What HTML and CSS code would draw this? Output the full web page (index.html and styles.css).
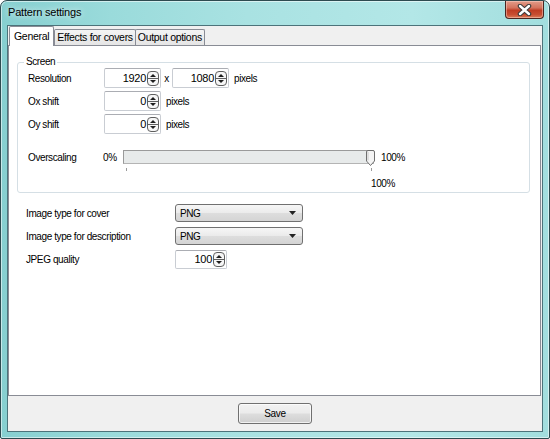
FILE: index.html
```html
<!DOCTYPE html>
<html>
<head>
<meta charset="utf-8">
<link rel="stylesheet" href="styles.css">
</head>
<body>
<div class="window">
  <div class="titlebar">
    <span class="title">Pattern settings</span>
    <div class="close">
      <svg width="17" height="12" viewBox="0 0 17 12">
        <path d="M4 2 L13 10 M13 2 L4 10" stroke="#3a3a3a" stroke-width="4.5" stroke-linecap="round"/>
        <path d="M4 2 L13 10 M13 2 L4 10" stroke="#ffffff" stroke-width="2.4" stroke-linecap="round"/>
      </svg>
    </div>
  </div>
  <div class="client">
    <div class="tabs">
      <div class="tab active">General</div>
      <div class="tab">Effects for covers</div>
      <div class="tab">Output options</div>
    </div>
    <div class="panel">
      <fieldset class="group">
        <legend>Screen</legend>
        <div class="row">
          <span class="lbl">Resolution</span>
          <div class="spin w57"><span class="val">1920</span><span class="arrows"><svg width="12" height="15" viewBox="0 0 12 15"><rect x="0.5" y="0.5" width="11" height="14" rx="3.5" fill="#f6f6f6" stroke="#5e5e5e"/><line x1="1" y1="7.5" x2="11" y2="7.5" stroke="#5e5e5e"/><path d="M3 6 L6 3 L9 6Z" fill="#1e1e1e"/><path d="M3 9 L6 12 L9 9Z" fill="#1e1e1e"/></svg></span></div>
          <span class="sep">x</span>
          <div class="spin w57"><span class="val">1080</span><span class="arrows"><svg width="12" height="15" viewBox="0 0 12 15"><rect x="0.5" y="0.5" width="11" height="14" rx="3.5" fill="#f6f6f6" stroke="#5e5e5e"/><line x1="1" y1="7.5" x2="11" y2="7.5" stroke="#5e5e5e"/><path d="M3 6 L6 3 L9 6Z" fill="#1e1e1e"/><path d="M3 9 L6 12 L9 9Z" fill="#1e1e1e"/></svg></span></div>
          <span class="unit">pixels</span>
        </div>
        <div class="row">
          <span class="lbl">Ox shift</span>
          <div class="spin w57"><span class="val">0</span><span class="arrows"><svg width="12" height="15" viewBox="0 0 12 15"><rect x="0.5" y="0.5" width="11" height="14" rx="3.5" fill="#f6f6f6" stroke="#5e5e5e"/><line x1="1" y1="7.5" x2="11" y2="7.5" stroke="#5e5e5e"/><path d="M3 6 L6 3 L9 6Z" fill="#1e1e1e"/><path d="M3 9 L6 12 L9 9Z" fill="#1e1e1e"/></svg></span></div>
          <span class="unit">pixels</span>
        </div>
        <div class="row">
          <span class="lbl">Oy shift</span>
          <div class="spin w57"><span class="val">0</span><span class="arrows"><svg width="12" height="15" viewBox="0 0 12 15"><rect x="0.5" y="0.5" width="11" height="14" rx="3.5" fill="#f6f6f6" stroke="#5e5e5e"/><line x1="1" y1="7.5" x2="11" y2="7.5" stroke="#5e5e5e"/><path d="M3 6 L6 3 L9 6Z" fill="#1e1e1e"/><path d="M3 9 L6 12 L9 9Z" fill="#1e1e1e"/></svg></span></div>
          <span class="unit">pixels</span>
        </div>
        <div class="row slider-row">
          <span class="lbl lbl-short">Overscaling</span>
          <span class="pct">0%</span>
          <div class="track">
            <svg class="thumb" width="9" height="16" viewBox="0 0 9 16"><path d="M0.5 2 Q0.5 0.5 2 0.5 H7 Q8.5 0.5 8.5 2 V11 L4.5 15.5 L0.5 11 Z" fill="#f4f4f4" stroke="#6f6f6f"/><path d="M2 2 V10.5" stroke="#c8c8c8"/></svg>
          </div>
          <span class="pct right">100%</span>
        </div>
        <div class="ticks"><span class="tick"></span><span class="tick"></span></div>
        <div class="ticklabel">100%</div>
      </fieldset>
      <div class="row out">
        <span class="lbl wide">Image type for cover</span>
        <div class="combo"><span>PNG</span><svg width="7" height="4" viewBox="0 0 7 4"><path d="M0 0 H7 L3.5 4Z" fill="#222"/></svg></div>
      </div>
      <div class="row out">
        <span class="lbl wide">Image type for description</span>
        <div class="combo"><span>PNG</span><svg width="7" height="4" viewBox="0 0 7 4"><path d="M0 0 H7 L3.5 4Z" fill="#222"/></svg></div>
      </div>
      <div class="row out">
        <span class="lbl wide">JPEG quality</span>
        <div class="spin w52"><span class="val">100</span><span class="arrows"><svg width="12" height="15" viewBox="0 0 12 15"><rect x="0.5" y="0.5" width="11" height="14" rx="3.5" fill="#f6f6f6" stroke="#5e5e5e"/><line x1="1" y1="7.5" x2="11" y2="7.5" stroke="#5e5e5e"/><path d="M3 6 L6 3 L9 6Z" fill="#1e1e1e"/><path d="M3 9 L6 12 L9 9Z" fill="#1e1e1e"/></svg></span></div>
      </div>
    </div>
    <div class="footer">
      <button class="btn">Save</button>
    </div>
  </div>
</div>
</body>
</html>
```

FILE: styles.css
```css
* { box-sizing: border-box; }
html, body { margin: 0; padding: 0; background: #ffffff; }
body {
  font-family: "Liberation Sans", Arial, sans-serif;
  font-size: 10px;
  letter-spacing: -0.4px;
  color: #000;
}
.window {
  width: 550px;
  height: 439px;
  border: 1px solid #2d4b50;
  border-radius: 7px 7px 2px 2px;
  background: linear-gradient(90deg, #86cfd0 0%, #9adbdb 20%, #a9e2e2 45%, #b3e7e7 75%, #a2dede 100%);
  box-shadow: inset 0 0 0 1px rgba(255,255,255,0.55);
  padding: 0 6px 6px 6px;
  display: flex;
  flex-direction: column;
}
.titlebar {
  height: 24px;
  display: flex;
  align-items: flex-start;
}
.title {
  font-size: 11px;
  letter-spacing: -0.2px;
  margin-top: 5px;
  margin-left: 1px;
  color: #000;
  text-shadow: 0 0 6px rgba(255,255,255,0.9);
}
.close {
  margin-left: auto;
  margin-right: -1px;
  width: 39px;
  height: 18px;
  border: 1px solid #4a2520;
  border-top: none;
  border-radius: 0 0 4px 4px;
  background: linear-gradient(180deg, #e39d8a 0%, #d4735d 40%, #bf3d24 55%, #c84e32 80%, #db7c58 100%);
  box-shadow: inset 0 0 0 1px rgba(255,220,210,0.45);
  display: flex;
  align-items: center;
  justify-content: center;
}
.client {
  flex: 1;
  background: #f0f0f0;
  border: 1px solid #4c737a;
  display: flex;
  flex-direction: column;
}
.tabs {
  display: flex;
  align-items: flex-end;
  height: 19px;
  padding-left: 1px;
  position: relative;
  z-index: 1;
}
.tab {
  height: 16px;
  padding: 0 2px;
  border: 1px solid #898c95;
  border-bottom: none;
  background: linear-gradient(180deg, #f4f4f4, #e5e5e5);
  font-size: 10.5px;
  letter-spacing: -0.3px;
  line-height: 15px;
  margin-right: -1px;
  border-radius: 2px 2px 0 0;
  color: #000;
}
.tab.active {
  height: 20px;
  margin-bottom: -1px;
  background: #ffffff;
  padding: 0 4px;
  line-height: 19px;
  margin-right: 0;
}
.panel {
  height: 351px;
  margin-right: 1px;
  background: #ffffff;
  border: 1px solid #898c95;
  display: flex;
  flex-direction: column;
}
.group {
  margin: 10px 10px 0 8px;
  padding: 0 10px 0 10px;
  border: 1px solid #d5dfe5;
  border-radius: 3px;
  height: 137px;
  min-width: 0;
}
.group legend {
  margin-left: -4px;
  padding: 0 2px;
  line-height: 12px;
  color: #000;
}
.row {
  display: flex;
  align-items: center;
  height: 20px;
  margin-bottom: 3px;
}
.lbl {
  width: 76px;
  flex: none;
}
.lbl-short { width: 75px; }
.spin {
  height: 20px;
  display: flex;
  align-items: center;
  justify-content: flex-end;
  background: #ffffff;
  border: 1px solid #c9cdd3;
  border-top-color: #abadb3;
  border-radius: 2px;
  padding-right: 1px;
}
.w57 { width: 57px; }
.w52 { width: 52px; height: 19px; }
.val {
  margin-right: 1px;
  font-size: 11px;
  letter-spacing: -0.3px;
}
.arrows { display: flex; }
.sep {
  width: 11px;
  text-align: center;
}
.unit { margin-left: 5px; }
.slider-row {
  margin-top: 13px;
  margin-bottom: 1px;
}
.pct { width: 20px; }
.pct.right { margin-left: 7px; }
.track {
  width: 251px;
  height: 14px;
  background: #e7eaea;
  border: 1px solid #b4b4b4;
  border-top-color: #9a9a9a;
  border-left-color: #9a9a9a;
  display: flex;
  justify-content: flex-end;
  align-items: center;
  position: relative;
}
.thumb {
  margin-right: -2px;
  margin-top: 1px;
}
.ticks {
  display: flex;
  justify-content: space-between;
  width: 246px;
  margin-left: 98px;
  height: 4px;
}
.tick {
  width: 1px;
  height: 3px;
  background: #9a9a9a;
}
.ticklabel {
  margin-left: 343px;
  margin-top: 6px;
  line-height: 12px;
}
.out {
  margin-left: 17px;
}
.group + .out { margin-top: 10px; }
.lbl.wide { width: 149px; }
.combo {
  width: 128px;
  height: 18px;
  border: 1px solid #707070;
  border-radius: 3px;
  background: linear-gradient(180deg, #f6f6f6 0%, #ebebeb 48%, #dddddd 52%, #d4d4d4 100%);
  display: flex;
  align-items: center;
  justify-content: space-between;
  padding: 0 6px 0 4px;
}
.footer {
  flex: 1;
  display: flex;
  align-items: center;
  justify-content: center;
}
.btn {
  width: 74px;
  height: 21px;
  font-family: inherit;
  font-size: 10px;
  letter-spacing: -0.3px;
  color: #000;
  border: 1px solid #707070;
  border-radius: 3px;
  background: linear-gradient(180deg, #f2f2f2 0%, #ebebeb 48%, #dddddd 52%, #cfcfcf 100%);
  box-shadow: inset 0 0 0 1px rgba(255,255,255,0.7);
  padding: 0;
}
```
